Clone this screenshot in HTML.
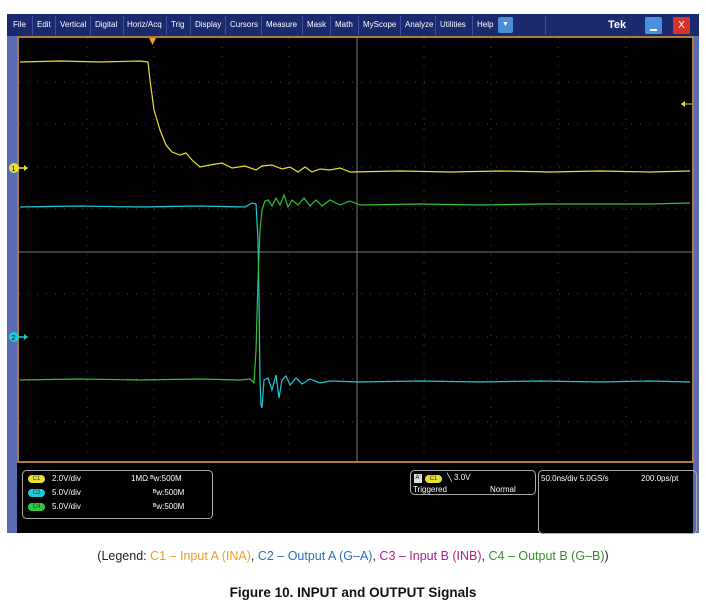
<!DOCTYPE html>
<html><head><meta charset="utf-8"><style>
body{margin:0;width:706px;height:610px;background:#fff;position:relative;font-family:"Liberation Sans",sans-serif;overflow:hidden}
.a{position:absolute}
.menu{left:7px;top:14px;width:692px;height:22px;background:#1a2a6e;color:#fff;font-size:8px}
.menu span{position:absolute;top:6px}
.sep{position:absolute;top:2px;width:1px;height:19px;background:#3c4f9a}
.lbl{font-size:8px;color:#fff;position:absolute;white-space:nowrap}
.pill{position:absolute;width:17px;height:8px;border-radius:4px;font-size:6px;text-align:center;line-height:8px;color:#333}
</style></head><body>
<div class="a menu">
<span style="left:6px">File</span><span style="left:30px">Edit</span><span style="left:53px">Vertical</span><span style="left:88px">Digital</span><span style="left:120px">Horiz/Acq</span><span style="left:164px">Trig</span><span style="left:188px">Display</span><span style="left:223px">Cursors</span><span style="left:259px">Measure</span><span style="left:300px">Mask</span><span style="left:328px">Math</span><span style="left:356px">MyScope</span><span style="left:398px">Analyze</span><span style="left:433px">Utilities</span><span style="left:470px">Help</span>
<div class="sep" style="left:25px"></div><div class="sep" style="left:48px"></div><div class="sep" style="left:83px"></div><div class="sep" style="left:116px"></div><div class="sep" style="left:159px"></div><div class="sep" style="left:183px"></div><div class="sep" style="left:218px"></div><div class="sep" style="left:254px"></div><div class="sep" style="left:295px"></div><div class="sep" style="left:323px"></div><div class="sep" style="left:351px"></div><div class="sep" style="left:393px"></div><div class="sep" style="left:428px"></div><div class="sep" style="left:465px"></div><div class="sep" style="left:538px"></div>
<div class="a" style="left:491px;top:3px;width:15px;height:16px;background:#4a8ed8;border-radius:2px;font-size:7px;text-align:center;line-height:16px">▼</div>
<span style="left:601px;top:5px;font-size:11px;font-weight:bold">Tek</span>
<div class="a" style="left:638px;top:3px;width:17px;height:17px;background:#4a90e0;border-radius:2px"><div class="a" style="left:5px;top:12px;width:7px;height:2px;background:#fff"></div></div>
<div class="a" style="left:666px;top:3px;width:17px;height:17px;background:#d8332a;border-radius:2px;text-align:center;font-size:10px;line-height:17px">X</div>
</div>
<div class="a" style="left:7px;top:36px;width:692px;height:497px;background:#5a6db4"></div>
<div class="a" style="left:17px;top:462px;width:676px;height:71px;background:#000"></div>
<svg class="a" style="left:0;top:0" width="706" height="610">
<rect x="18" y="37" width="675" height="425" fill="#000" stroke="#b07a3a" stroke-width="2"/>
<g stroke="#4a4a4a" stroke-width="1" stroke-dasharray="1 8">
<line x1="87" y1="38" x2="87" y2="461"/><line x1="154" y1="38" x2="154" y2="461"/><line x1="222" y1="38" x2="222" y2="461"/><line x1="289" y1="38" x2="289" y2="461"/><line x1="424" y1="38" x2="424" y2="461"/><line x1="491" y1="38" x2="491" y2="461"/><line x1="558" y1="38" x2="558" y2="461"/><line x1="626" y1="38" x2="626" y2="461"/>
<line x1="19" y1="82" x2="692" y2="82"/><line x1="19" y1="124" x2="692" y2="124"/><line x1="19" y1="167" x2="692" y2="167"/><line x1="19" y1="209" x2="692" y2="209"/><line x1="19" y1="294" x2="692" y2="294"/><line x1="19" y1="337" x2="692" y2="337"/><line x1="19" y1="379" x2="692" y2="379"/><line x1="19" y1="422" x2="692" y2="422"/>
</g>
<line x1="357" y1="38" x2="357" y2="461" stroke="#777"/><line x1="19" y1="252" x2="692" y2="252" stroke="#777"/>
<polygon points="149,38 156,38 152.5,45" fill="#f0a020"/>
<polyline fill="none" stroke="#e8e030" stroke-width="1.2" points="20,62 60,61 100,62 140,61 148,62 150,80 154,110 160,130 166,145 172,152 180,155 186,153 192,160 200,167 210,165 222,163 232,168 245,166 256,170 262,166 272,165 282,169 290,167 298,172 305,167 312,172 320,169 330,170 340,168 350,172 400,171 450,172 500,171 550,172 600,171 650,172 690,171"/>
<polyline fill="none" stroke="#20c8d8" stroke-width="1.2" points="20,207 80,206 140,207 200,206 245,207 252,203 256,204 258,240 259,300 260,380 261,405 262,408 264,380 268,378 272,390 276,375 279,398 282,380 286,376 290,385 296,378 302,384 310,379 320,383 330,381 360,382 420,381 480,382 540,381 600,382 650,381 690,382"/>
<polyline fill="none" stroke="#30c030" stroke-width="1.2" points="20,380 80,379 140,380 200,379 240,380 250,379 254,383 256,350 258,280 260,230 262,210 265,201 268,200 272,206 276,198 280,205 284,195 288,207 292,200 298,205 304,198 310,206 316,200 322,206 330,200 340,205 350,201 360,205 420,204 480,205 540,204 600,204 650,204 690,203"/>
<circle cx="14" cy="168" r="5" fill="#e8e030"/><text x="11.5" y="171" font-size="7" font-family="Liberation Sans">1</text><path d="M19 168h6" stroke="#e8e030" stroke-width="1.5"/><polygon points="24,165 28,168 24,171" fill="#e8e030"/>
<circle cx="14" cy="337" r="5" fill="#20c8d8"/><text x="11.5" y="340" font-size="7" font-family="Liberation Sans">2</text><path d="M19 337h6" stroke="#20c8d8" stroke-width="1.5"/><polygon points="24,334 28,337 24,340" fill="#20c8d8"/>
<polygon points="681,104 685,101 685,107" fill="#e8e030"/><path d="M685 104h7" stroke="#e8e030"/>
<rect x="22.5" y="470.5" width="190" height="48" rx="4" fill="none" stroke="#aaa"/>
<rect x="410.5" y="470.5" width="125" height="24" rx="4" fill="none" stroke="#aaa"/>
<rect x="538.5" y="470.5" width="158" height="63" rx="4" fill="none" stroke="#aaa"/>
</svg>
<div class="pill" style="left:28px;top:475px;background:#e8e030">C1</div>
<div class="pill" style="left:28px;top:489px;background:#20c8d8">C2</div>
<div class="pill" style="left:28px;top:503px;background:#30c840">C4</div>
<div class="lbl" style="left:52px;top:474px">2.0V/div</div>
<div class="lbl" style="left:52px;top:488px">5.0V/div</div>
<div class="lbl" style="left:52px;top:502px">5.0V/div</div>
<div class="lbl" style="left:131px;top:474px">1MΩ ᴮw:500M</div>
<div class="lbl" style="left:153px;top:488px">ᴮw:500M</div>
<div class="lbl" style="left:153px;top:502px">ᴮw:500M</div>
<div class="a" style="left:414px;top:474px;width:8px;height:9px;background:#ddd;font-size:6px;line-height:9px;text-align:center">A'</div>
<div class="pill" style="left:425px;top:475px;background:#e8e030">C1</div>
<div class="lbl" style="left:447px;top:473px">╲ 3.0V</div>
<div class="lbl" style="left:413px;top:485px">Triggered</div>
<div class="lbl" style="left:490px;top:485px">Normal</div>
<div class="lbl" style="left:541px;top:474px">50.0ns/div 5.0GS/s</div>
<div class="lbl" style="left:641px;top:474px">200.0ps/pt</div>
<div class="a" style="left:0;top:549px;width:706px;text-align:center;font-size:12.5px;color:#222">(Legend: <span style="color:#f0a020">C1 – Input A (INA)</span>, <span style="color:#2a6fc0">C2 – Output A (G–A)</span>, <span style="color:#b0208a">C3 – Input B (INB)</span>, <span style="color:#3a8a2a">C4 – Output B (G–B)</span>)</div>
<div class="a" style="left:0;top:585px;width:706px;text-align:center;font-size:13.5px;font-weight:bold;color:#111">Figure 10. INPUT and OUTPUT Signals</div>
</body></html>
